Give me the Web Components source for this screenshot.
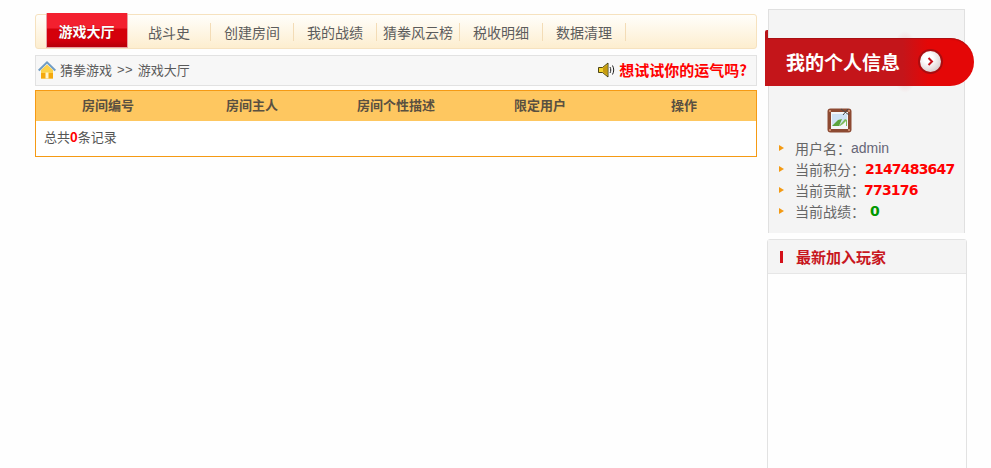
<!DOCTYPE html>
<html lang="zh">
<head>
<meta charset="utf-8">
<title>游戏大厅</title>
<style>
  html, body { margin: 0; height: 468px; overflow: hidden; background: #fefefe; }
  body {
    font: 14px "Noto Sans CJK SC", "Liberation Sans", sans-serif;
    color: #555;
  }
  game-page { height: 468px; }
</style>
</head>
<body>
<game-page>
  <game-nav slot="main">
    <nav-item active>游戏大厅</nav-item>
    <nav-item>战斗史</nav-item>
    <nav-item>创建房间</nav-item>
    <nav-item>我的战绩</nav-item>
    <nav-item>猜拳风云榜</nav-item>
    <nav-item>税收明细</nav-item>
    <nav-item>数据清理</nav-item>
  </game-nav>
  <bread-crumb slot="main"></bread-crumb>
  <room-table slot="main"></room-table>
  <user-panel slot="side">
    <stat-row label="用户名：" value="admin" kind="plain"></stat-row>
    <stat-row label="当前积分：" value="2147483647" kind="red"></stat-row>
    <stat-row label="当前贡献：" value="773176" kind="red" tight></stat-row>
    <stat-row label="当前战绩：" value="0" kind="green"></stat-row>
  </user-panel>
  <player-panel slot="side"></player-panel>
</game-page>

<script>
// Mise en page : colonne principale + colonne de droite
class GamePage extends HTMLElement {
  constructor() {
    super();
    const shadow = this.attachShadow({ mode: "open" });
    shadow.innerHTML = `
      <style>
        :host { display: flex; padding: 9px 0 0 35px; box-sizing: border-box; overflow: hidden; }
        .main { width: 722px; padding-top: 4px; display: flex; flex-direction: column; }
        .side { width: 200px; margin-left: 10px; display: flex; flex-direction: column; }
      </style>
      <div class="main"><slot name="main"></slot></div>
      <div class="side"><slot name="side"></slot></div>
    `;
  }
}

class GameNav extends HTMLElement {
  constructor() {
    super();
    const shadow = this.attachShadow({ mode: "open" });
    shadow.innerHTML = `
      <style>
        :host {
          display: flex;
          align-items: center;
          flex: none;
          box-sizing: border-box;
          height: 35px;
          margin-top: 1px;
          padding-left: 10px;
          border: 1px solid #f6e2bf;
          border-radius: 3px;
          background: linear-gradient(#fffefb, #fdeecf);
        }
      </style>
      <slot></slot>
    `;
  }
}

class NavItem extends HTMLElement {
  constructor() {
    super();
    const shadow = this.attachShadow({ mode: "open" });
    shadow.innerHTML = `
      <style>
        :host {
          display: block;
          box-sizing: border-box;
          width: 83px;
          height: 18px;
          line-height: 18px;
          text-align: center;
          font-size: 14px;
          color: #5c5c5c;
          border-right: 1px solid #f3dcb6;
        }
        :host([active]) {
          width: 82px;
          height: 35px;
          line-height: 36px;
          padding-right: 1px;
          margin-top: -2px;
          font-weight: bold;
          color: #fff;
          border: 1px solid #e8a0a4;
          border-top: 0;
          border-radius: 1px;
          background: linear-gradient(#f3202f 0, #f3202f 15px, #d4000b 16px, #d4000b 27px, #b60008 100%);
          text-shadow: 0 0 1px #900;
        }
      </style>
      <slot></slot>
    `;
  }
}

class BreadCrumb extends HTMLElement {
  constructor() {
    super();
    const shadow = this.attachShadow({ mode: "open" });
    shadow.innerHTML = `
      <style>
        :host {
          display: flex;
          align-items: center;
          flex: none;
          box-sizing: border-box;
          height: 31px;
          margin-top: 6px;
          padding: 0 9px 2px 2px;
          border: 1px solid #e2e2e2;
          background: #f7f7f7;
          font-size: 13px;
          color: #5a5a5a;
        }
        svg { display: block; }
        .home { margin-right: 4px; }
        .sep { font-family: "Liberation Sans", sans-serif; margin: 0 5px 0 5px; letter-spacing: .3px; }
        .luck { margin-left: auto; display: flex; align-items: center; color: #f00; font-weight: bold; font-size: 15px; }
        .luck svg { margin-right: 3px; }
      </style>
      <svg class="home" width="18" height="18" viewBox="0 0 18 18">
        <path d="M3 9v8.500h12V9L9 3.500z" fill="#fdd24a"/>
        <path d="M3 12h12v5.500H3z" fill="#f4a90e"/>
        <path d="M7.500 11.500h3v6h-3z" fill="#fff4cf"/>
        <path d="M.7 9.500 9 1.400l8.300 8.100" fill="none" stroke="#6f9cc4" stroke-width="2"/>
      </svg>
      <span>猜拳游戏</span><span class="sep">&gt;&gt;</span><span>游戏大厅</span>
      <span class="luck">
        <svg width="18" height="16" viewBox="0 0 18 16">
          <path d="M.5 5.500h4L10 1v14L4.500 10.500h-4z" fill="#f2d22c" stroke="#3a3208" stroke-width=".9"/>
          <path d="M5 6v4l4 3V3z" fill="#c79a10"/>
          <path d="M12 5c1 2 1 4 0 6M14.500 3.500c1.600 3 1.600 6 0 9" fill="none" stroke="#222" stroke-width="1"/>
        </svg>想试试你的运气吗?
      </span>
    `;
  }
}

class RoomTable extends HTMLElement {
  constructor() {
    super();
    const shadow = this.attachShadow({ mode: "open" });
    shadow.innerHTML = `
      <style>
        :host {
          display: block;
          flex: none;
          box-sizing: border-box;
          height: 67px;
          margin-top: 4px;
          border: 1px solid #f59a14;
          background: #fff;
          font-size: 13px;
          color: #555;
        }
        .head {
          display: grid;
          grid-template-columns: 144px 144px 144px 144px 144px;
          height: 30px;
          line-height: 28px;
          background: #fec760;
          font-weight: bold;
          text-align: center;
          color: #5a5040;
        }
        .total { padding: 6px 0 0 8px; line-height: 19px; color: #555; }
        b { color: #f00; }
      </style>
      <div class="head">
        <span>房间编号</span><span>房间主人</span><span>房间个性描述</span><span>限定用户</span><span>操作</span>
      </div>
      <div class="total">总共<b>0</b>条记录</div>
    `;
  }
}

class UserPanel extends HTMLElement {
  constructor() {
    super();
    const shadow = this.attachShadow({ mode: "open" });
    shadow.innerHTML = `
      <style>
        :host {
          display: block;
          flex: none;
          isolation: isolate;
          box-sizing: border-box;
          width: 197px;
          height: 224px;
          margin-left: 1px;
          padding-top: 28px;
          border: 1px solid #e0e0e0;
          border-bottom: 0;
          background: #f4f4f4;
        }
        .ribbon {
          position: relative;
          box-sizing: border-box;
          display: flex;
          align-items: center;
          width: 209px;
          height: 48px;
          margin-left: -4px;
          padding: 0 0 2px 21px;
          border-radius: 0 24px 24px 0;
          background: linear-gradient(90deg, #c4151a 0, #c4151a 66%, #e40707 78%, #e40707 100%);
          box-shadow: inset 0 2px 1px -1px #a80f12;
          color: #fff;
          font-size: 19px;
          font-weight: bold;
        }
        /* petit pli en haut a gauche */
        .ribbon::before {
          content: "";
          position: absolute;
          left: 0;
          top: -8px;
          width: 3px;
          height: 10px;
          background: #b81318;
          border-radius: 2px 0 0 0;
        }
        .ribbon::after {
          content: "";
          position: absolute;
          left: 126px;
          top: -7px;
          width: 28px;
          height: 62px;
          background: radial-gradient(closest-side, rgba(226,60,70,.4), rgba(226,60,70,0));
          z-index: -1;
        }
        .ribbon span { position: relative; z-index: 1; }
        .go {
          position: absolute;
          left: 153px;
          top: 11px;
          z-index: 1;
          box-sizing: border-box;
          width: 25px;
          height: 25px;
          border: 2px solid #a90d10;
          border-radius: 50%;
          background: radial-gradient(circle at 40% 35%, #fff 25%, #e6dede 60%, #c9b4b4 100%);
          display: block;
        }
        .avatar { display: block; margin: 22px 0 0 58px; }
        .rows { padding: 4px 0 0 10px; }
      </style>
      <div class="ribbon">
        <span>我的个人信息</span>
        <svg class="go" viewBox="0 0 21 21"><path d="M8.500 7l3.500 3.500-3.500 3.500" fill="none" stroke="#c8101a" stroke-width="2"/></svg>
      </div>
      <svg class="avatar" width="25" height="25" viewBox="0 0 25 25">
        <rect x=".5" y=".5" width="24" height="24" rx="3" fill="#8d4a32"/>
        <path d="M2 2h2v2H2zM21 2h2v2h-2zM2 21h2v2H2zM21 21h2v2h-2z" fill="#c98a6c"/>
        <rect x="4" y="4" width="17" height="17" fill="#f4f6f8"/>
        <path d="M5 6h15v12H5z" fill="#cfe2f4"/>
        <path d="M5 18l6-6 4-1-3 7z" fill="#5aa53c"/>
        <path d="M12 18l6-7 2 1v6z" fill="#7fbb5c"/>
        <path d="M16 16l3-3v5h-6z" fill="#f4f6f8"/>
        <path d="M14 1l8 6M21 1l-5 6" stroke="#4a4a4a" stroke-width="1"/>
      </svg>
      <div class="rows"><slot></slot></div>
    `;
  }
}

class StatRow extends HTMLElement {
  constructor() {
    super();
    const shadow = this.attachShadow({ mode: "open" });
    shadow.innerHTML = `
      <style>
        :host {
          display: flex;
          align-items: center;
          height: 21px;
          font-size: 14px;
          color: #666;
          white-space: nowrap;
        }
        .dot { width: 0; height: 0; margin-right: 11px; border-left: 5px solid #f39a13; border-top: 3.500px solid transparent; border-bottom: 3.500px solid transparent; }
        .value { font: bold 14px "DejaVu Sans", sans-serif; letter-spacing: -.8px; }
        .red { color: #f00; }
        .green { color: #090; margin-left: 5px; }
        .plain { font: 14px "Liberation Sans", sans-serif; color: #667; letter-spacing: 0; }
      </style>
      <span class="dot"></span>
      <span class="label"></span>
      <span class="value"></span>
    `;
    shadow.querySelector(".label").textContent = this.getAttribute("label");
    const value = shadow.querySelector(".value");
    value.textContent = this.getAttribute("value");
    value.classList.add(this.getAttribute("kind"));
    if (this.hasAttribute("tight")) {
      shadow.querySelector(".label").style.marginRight = "-1px";
    }
  }
}

class PlayerPanel extends HTMLElement {
  constructor() {
    super();
    const shadow = this.attachShadow({ mode: "open" });
    shadow.innerHTML = `
      <style>
        :host {
          display: block;
          flex: none;
          box-sizing: border-box;
          width: 200px;
          height: 300px;
          margin-top: 6px;
          border: 1px solid #e2e2e2;
          border-radius: 3px 3px 0 0;
          background: #fefefe;
        }
        .title {
          box-sizing: border-box;
          height: 34px;
          line-height: 33px;
          padding-left: 12px;
          border-bottom: 1px solid #e6e6e6;
          background: #f4f4f4;
          font-size: 15px;
          font-weight: bold;
          color: #c8171e;
          display: flex;
          align-items: center;
        }
        .title i { width: 3px; height: 12px; margin-right: 13px; background: #d4101a; }
      </style>
      <div class="title"><i></i>最新加入玩家</div>
    `;
  }
}

customElements.define("game-page", GamePage);
customElements.define("game-nav", GameNav);
customElements.define("nav-item", NavItem);
customElements.define("bread-crumb", BreadCrumb);
customElements.define("room-table", RoomTable);
customElements.define("user-panel", UserPanel);
customElements.define("stat-row", StatRow);
customElements.define("player-panel", PlayerPanel);
</script>
</body>
</html>
